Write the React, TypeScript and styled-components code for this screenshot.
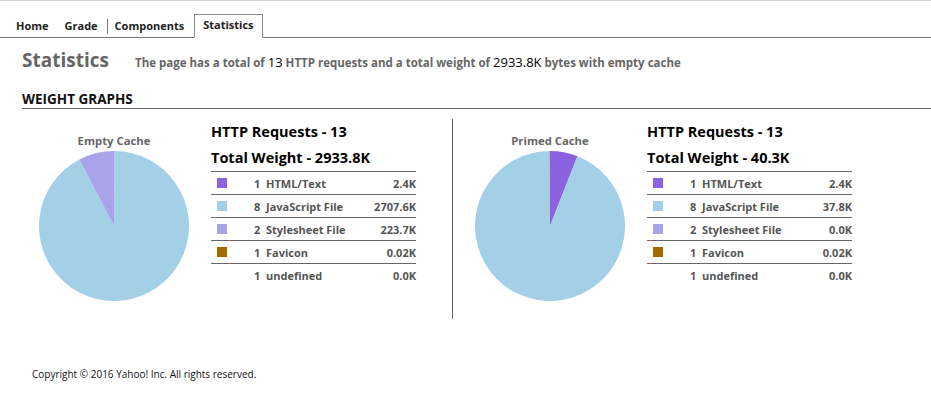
import React from 'react'
import styled, { createGlobalStyle } from 'styled-components'

const GlobalStyle = createGlobalStyle`
  html, body {
    margin: 0;
    padding: 0;
    background: #fff;
    font-family: "Open Sans", "DejaVu Sans", sans-serif;
    color: #000;
  }
  body {
    border-top: 1px solid #d4d4d4;
  }
`

const COLORS = {
  html: '#8b62df',
  js: '#a3d0e7',
  css: '#aaa3ea',
  favicon: '#a36b00',
}

interface Row {
  count: number
  label: string
  size: string
  weight: number
  color?: string
}

interface CacheData {
  title: string
  requests: number
  total: string
  rows: Row[]
}

const empty: CacheData = {
  title: 'Empty Cache',
  requests: 13,
  total: '2933.8K',
  rows: [
    { count: 1, label: 'HTML/Text', size: '2.4K', weight: 2.4, color: COLORS.html },
    { count: 8, label: 'JavaScript File', size: '2707.6K', weight: 2707.6, color: COLORS.js },
    { count: 2, label: 'Stylesheet File', size: '223.7K', weight: 223.7, color: COLORS.css },
    { count: 1, label: 'Favicon', size: '0.02K', weight: 0.02, color: COLORS.favicon },
    { count: 1, label: 'undefined', size: '0.0K', weight: 0 },
  ],
}

const primed: CacheData = {
  title: 'Primed Cache',
  requests: 13,
  total: '40.3K',
  rows: [
    { count: 1, label: 'HTML/Text', size: '2.4K', weight: 2.4, color: COLORS.html },
    { count: 8, label: 'JavaScript File', size: '37.8K', weight: 37.8, color: COLORS.js },
    { count: 2, label: 'Stylesheet File', size: '0.0K', weight: 0, color: COLORS.css },
    { count: 1, label: 'Favicon', size: '0.02K', weight: 0.02, color: COLORS.favicon },
    { count: 1, label: 'undefined', size: '0.0K', weight: 0 },
  ],
}

const TabBar = styled.ul`
  display: flex;
  align-items: flex-end;
  list-style: none;
  margin: 14px 0 0 0;
  padding: 0 0 0 8px;
  height: 22px;
  border-bottom: 1px solid #777;
`

const Tab = styled.li<{ $active?: boolean; $divider?: boolean }>`
  position: relative;
  font-size: 11px;
  font-weight: 700;
  line-height: 20px;
  padding: 0 8px;
  color: #222;
  ${(p) =>
    p.$active
      ? `
    margin-left: 2px;
    margin-bottom: -1px;
    height: 22px;
    border: 1px solid #888;
    border-bottom: 1px solid #fff;
    background: #fff;
  `
      : `height: 21px;`}
  ${(p) =>
    p.$divider
      ? `
    margin-left: 1px;
    &::before {
      content: '';
      position: absolute;
      left: 0;
      top: 3px;
      height: 15px;
      border-left: 1px solid #777;
    }
  `
      : ''}
`

const Content = styled.div`
  padding-left: 22px;
`

const TitleRow = styled.div`
  display: flex;
  align-items: baseline;
  margin-top: 9px;
  height: 28px;
`

const Title = styled.h1`
  margin: 0;
  font-size: 19px;
  font-weight: 700;
  color: #666;
  width: 113px;
`

const Summary = styled.p`
  margin: 0;
  font-size: 11.5px;
  font-weight: 700;
  color: #666;
`

const Num = styled.span`
  font-size: 13px;
  font-weight: 400;
  color: #000;
`

const SectionHead = styled.h2`
  margin: 16px 0 0 0;
  font-size: 13.5px;
  font-weight: 700;
  line-height: 17px;
  color: #111;
  border-bottom: 1px solid #666;
`

const Graphs = styled.div`
  display: flex;
  margin-top: 10px;
  padding-left: 17px;
`

const Panel = styled.div`
  display: flex;
  gap: 22px;
`

const Divider = styled.div`
  width: 1px;
  height: 200px;
  background: #666;
  margin: 0 22px 0 36px;
`

const PieBox = styled.div`
  width: 150px;
  display: flex;
  flex-direction: column;
  align-items: center;
  padding-top: 14px;
`

const PieLabel = styled.div`
  font-size: 11.3px;
  font-weight: 700;
  color: #666;
  line-height: 15px;
  margin-bottom: 3px;
`

const Table = styled.div`
  width: 205px;
`

const TableHead = styled.div`
  font-size: 14.5px;
  font-weight: 700;
  color: #000;
  line-height: 26px;
`

const TableRow = styled.div`
  display: flex;
  align-items: center;
  height: 22px;
  border-top: 1px solid #666;
  font-size: 11px;
  font-weight: 700;
  color: #555;
`

const Swatch = styled.span<{ $color?: string }>`
  width: 10px;
  height: 10px;
  margin-left: 6px;
  background: ${(p) => p.$color || 'transparent'};
  flex: none;
`

const Count = styled.span`
  margin-left: 27px;
  width: 12px;
`

const Name = styled.span`
  flex: 1;
`

const Size = styled.span`
  text-align: right;
`

const Footer = styled.footer`
  margin-top: 48px;
  padding-left: 32px;
  font-size: 10px;
  color: #111;
`

function point(cx: number, cy: number, r: number, a: number) {
  return [cx + r * Math.sin(a), cy - r * Math.cos(a)]
}

const Pie: React.FC<{ rows: Row[] }> = ({ rows }) => {
  const total = rows.reduce((s, r) => s + r.weight, 0)
  const cx = 75
  const cy = 75
  const r = 75
  let start = 0
  return (
    <svg width="150" height="150" viewBox="0 0 150 150">
      {rows
        .filter((row) => row.weight > 0 && row.color)
        .map((row) => {
          const angle = (row.weight / total) * Math.PI * 2
          const end = start + angle
          const [x0, y0] = point(cx, cy, r, start)
          const [x1, y1] = point(cx, cy, r, end)
          const large = angle > Math.PI ? 1 : 0
          start = end
          return (
            <path
              key={row.label}
              d={`M${cx},${cy} L${x0},${y0} A${r},${r} 0 ${large} 1 ${x1},${y1} Z`}
              fill={row.color}
            />
          )
        })}
    </svg>
  )
}

const CachePanel: React.FC<{ data: CacheData }> = ({ data }) => (
  <Panel>
    <PieBox>
      <PieLabel>{data.title}</PieLabel>
      <Pie rows={data.rows} />
    </PieBox>
    <Table>
      <TableHead>HTTP Requests - {data.requests}</TableHead>
      <TableHead>Total Weight - {data.total}</TableHead>
      {data.rows.map((row) => (
        <TableRow key={row.label}>
          <Swatch $color={row.color} />
          <Count>{row.count}</Count>
          <Name>{row.label}</Name>
          <Size>{row.size}</Size>
        </TableRow>
      ))}
    </Table>
  </Panel>
)

export default function App() {
  return (
    <>
      <GlobalStyle />
      <TabBar>
        <Tab>Home</Tab>
        <Tab>Grade</Tab>
        <Tab $divider>Components</Tab>
        <Tab $active>Statistics</Tab>
      </TabBar>
      <Content>
        <TitleRow>
          <Title>Statistics</Title>
          <Summary>
            The page has a total of <Num>13</Num> HTTP requests and a total weight of{' '}
            <Num>2933.8K</Num> bytes with empty cache
          </Summary>
        </TitleRow>
        <SectionHead>WEIGHT GRAPHS</SectionHead>
        <Graphs>
          <CachePanel data={empty} />
          <Divider />
          <CachePanel data={primed} />
        </Graphs>
      </Content>
      <Footer>Copyright © 2016 Yahoo! Inc. All rights reserved.</Footer>
    </>
  )
}
